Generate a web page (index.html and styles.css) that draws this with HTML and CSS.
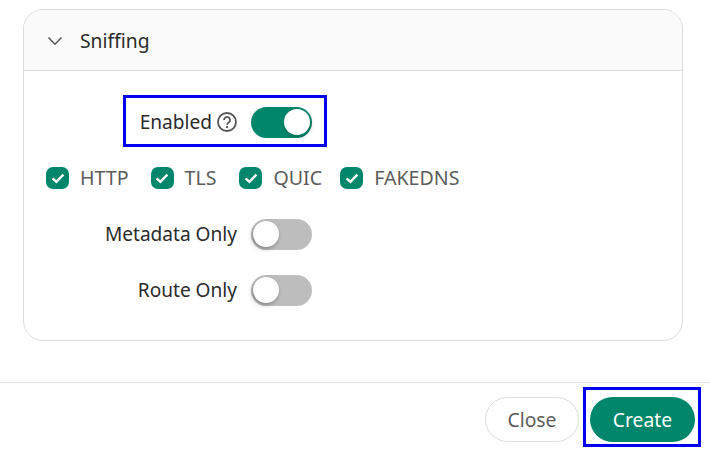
FILE: index.html
```html
<!DOCTYPE html>
<html lang="en">
<head>
<meta charset="utf-8">
<title>Sniffing</title>
<link rel="stylesheet" href="styles.css">
</head>
<body>
<main class="content">
  <section class="card">
    <header class="card-head">
      <svg class="chevron" viewBox="0 0 16 10" width="16" height="10"><path d="M1.5 1.5 8 8.2l6.5-6.7" fill="none" stroke="#555" stroke-width="1.5"/></svg>
      <span>Sniffing</span>
    </header>
    <div class="card-body">
      <div class="row">
        <div class="pair marked">
          <label class="label">Enabled</label>
          <svg class="help" viewBox="0 0 20 20" width="20" height="20"><circle cx="10" cy="10" r="9" fill="none" stroke="#555" stroke-width="1.8"/><path d="M7 8a3 3 0 1 1 4.7 2.4c-1.1.7-1.7 1.1-1.7 2.4" fill="none" stroke="#555" stroke-width="1.8"/><circle cx="10" cy="15.1" r="1.2" fill="#555"/></svg>
          <span class="switch on"><span class="knob"></span></span>
        </div>
      </div>
      <div class="checks">
        <div class="check http"><span class="box"><svg viewBox="0 0 16 16" width="16" height="16"><path d="M2.6 8.3 6.4 11.8 13.4 4.6" fill="none" stroke="#fff" stroke-width="2.5"/></svg></span><span>HTTP</span></div>
        <div class="check tls"><span class="box"><svg viewBox="0 0 16 16" width="16" height="16"><path d="M2.6 8.3 6.4 11.8 13.4 4.6" fill="none" stroke="#fff" stroke-width="2.5"/></svg></span><span>TLS</span></div>
        <div class="check quic"><span class="box"><svg viewBox="0 0 16 16" width="16" height="16"><path d="M2.6 8.3 6.4 11.8 13.4 4.6" fill="none" stroke="#fff" stroke-width="2.5"/></svg></span><span>QUIC</span></div>
        <div class="check"><span class="box"><svg viewBox="0 0 16 16" width="16" height="16"><path d="M2.6 8.3 6.4 11.8 13.4 4.6" fill="none" stroke="#fff" stroke-width="2.5"/></svg></span><span>FAKEDNS</span></div>
      </div>
      <div class="row">
        <div class="pair">
          <label class="label">Metadata Only</label>
          <span class="switch"><span class="knob"></span></span>
        </div>
      </div>
      <div class="row">
        <div class="pair">
          <label class="label">Route Only</label>
          <span class="switch"><span class="knob"></span></span>
        </div>
      </div>
    </div>
  </section>
</main>
<footer class="footer">
  <button class="btn ghost">Close</button>
  <span class="marked-btn"><button class="btn primary">Create</button></span>
</footer>
</body>
</html>
```
FILE: styles.css
```css
* { box-sizing: border-box; }
html, body { margin: 0; padding: 0; background: #fff; }
body {
  width: 710px;
  height: 451px;
  overflow: hidden;
  font-family: "Noto Sans", "Open Sans", "Liberation Sans", sans-serif;
  font-size: 19.1px;
  color: #2a2a2a;
}
.content { padding: 9px 27px 0 23px; height: 382px; }
.card {
  width: 660px;
  height: 332px;
  border: 1px solid #dcdcdc;
  border-radius: 20px;
  overflow: hidden;
}
.card-head {
  height: 61px;
  background: #fafafa;
  border-bottom: 1px solid #dcdcdc;
  display: flex;
  align-items: center;
  padding: 1px 0 0 23px;
  gap: 17px;
  font-size: 19.3px;
}
.chevron { flex: none; margin-top: 1px; }
.card-body { padding-top: 35px; }
.row { height: 32px; margin-bottom: 24px; display: flex; }
.pair {
  display: flex;
  align-items: center;
  justify-content: flex-end;
  width: 288px;
  position: relative;
}
.label { margin-right: 14px; }
.marked .label { margin-right: 5px; }
.help { margin-right: 14px; flex: none; }
.marked::after {
  content: "";
  position: absolute;
  left: 99px;
  right: -15px;
  top: -11px;
  bottom: -9px;
  border: 3px solid #0000f0;
  pointer-events: none;
}
.switch {
  width: 61px;
  height: 31px;
  flex: none;
  border-radius: 16px;
  background: #bdbdbd;
  display: flex;
  align-items: center;
  padding: 0 2px;
}
.switch.on { background: #00866b; justify-content: flex-end; }
.knob {
  width: 26px;
  height: 26px;
  border-radius: 50%;
  background: #fff;
  box-shadow: -1px 2px 4px rgba(0, 0, 0, .3);
}
.switch.on .knob { box-shadow: 1px 2px 4px rgba(0, 0, 0, .2); }
.checks {
  display: flex;
  align-items: center;
  height: 32px;
  margin-bottom: 24px;
  padding-left: 22px;
  color: #5c5c5c;
  font-size: 19.6px;
}
.check { display: flex; align-items: center; gap: 11px; }
.check > span:last-child { padding-bottom: 2px; }
.http { margin-right: 22px; }
.tls { margin-right: 23px; }
.quic { margin-right: 18px; }
.box {
  width: 23px;
  height: 22px;
  border-radius: 7px;
  background: #00866b;
  display: flex;
  align-items: center;
  justify-content: center;
  padding: 0;
}
.footer {
  height: 69px;
  border-top: 1px solid #e2e2e2;
  display: flex;
  justify-content: flex-end;
  align-items: flex-start;
  padding: 14px 15px 0 0;
  gap: 11px;
}
.btn {
  height: 45px;
  border-radius: 23px;
  font: inherit;
  font-size: 19.3px;
  padding: 0;
}
.ghost { width: 94px; background: #fff; border: 1.5px solid #dcdcdc; color: #5c5c5c; }
.primary { width: 105px; background: #00866b; border: none; color: #fff; display: block; }
.marked-btn { position: relative; display: block; }
.marked-btn::after {
  content: "";
  position: absolute;
  inset: -10px -6px -5px -7px;
  border: 3px solid #0000f0;
  pointer-events: none;
}
```
